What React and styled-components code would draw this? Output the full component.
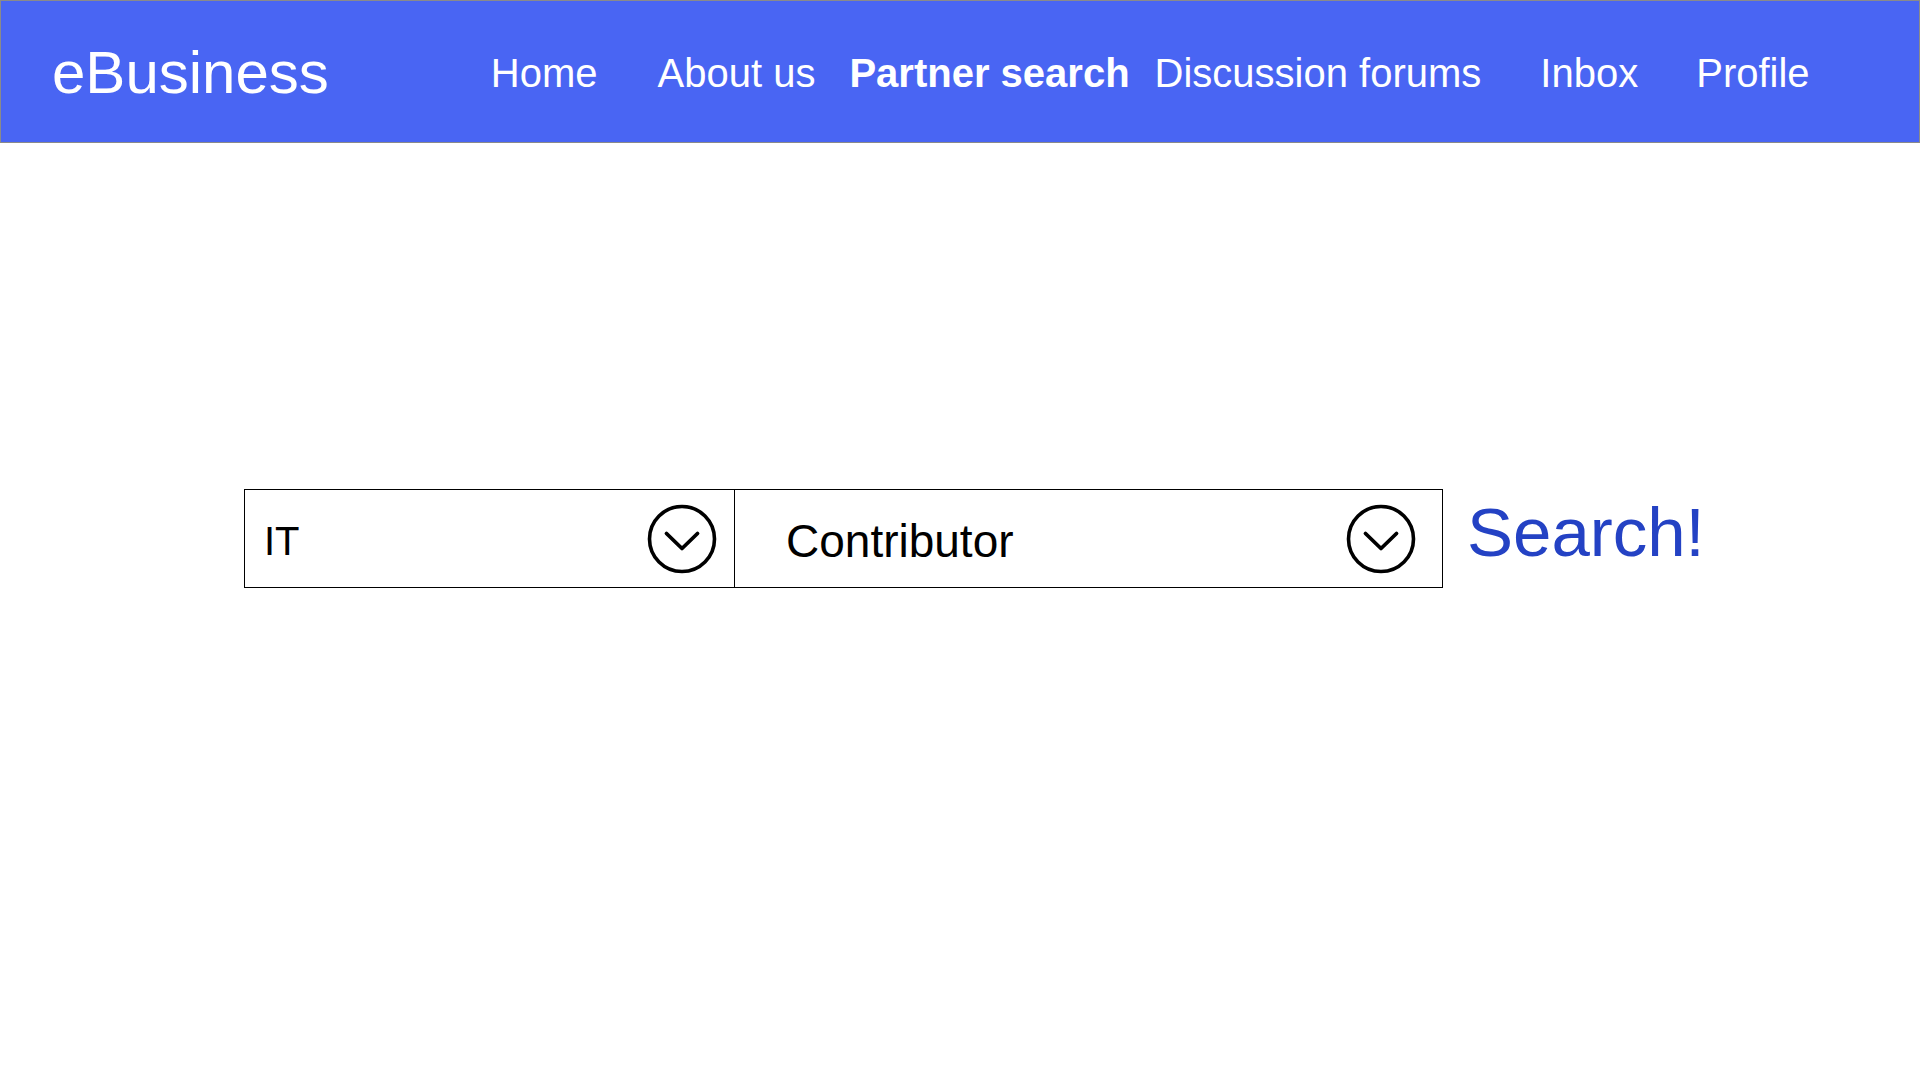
import React from "react";
import styled, { createGlobalStyle } from "styled-components";

const Global = createGlobalStyle`
  html, body { margin: 0; padding: 0; background: #ffffff; }
  body { font-family: "Liberation Sans", Arial, Helvetica, sans-serif; }
  * { box-sizing: border-box; }
`;

const Page = styled.div`
  width: 1920px;
  min-height: 1080px;
  background: #fff;
`;

const Header = styled.header`
  height: 143px;
  background: #4965f3;
  border: 1px solid #8a8a8a;
  display: flex;
  align-items: center;
  padding: 3px 0 0 51px;
`;

const Logo = styled.div`
  font-size: 60px;
  line-height: 1;
  color: #ffffff;
  white-space: nowrap;
`;

const Nav = styled.nav`
  display: flex;
  align-items: center;
  margin-left: 162px;
`;

const NavLink = styled.a`
  font-size: 40px;
  line-height: 1;
  color: #ffffff;
  font-weight: ${(p) => (p.$active ? 700 : 400)};
  margin-left: ${(p) => p.$gap || 0}px;
  white-space: nowrap;
  text-decoration: none;
  cursor: pointer;
`;

const Main = styled.main`
  padding: 346px 0 0 244px;
`;

const SearchRow = styled.div`
  display: flex;
  align-items: flex-start;
`;

const SearchBox = styled.div`
  display: flex;
  width: 1199px;
  height: 99px;
  border: 1px solid #000;
`;

const SelectCell = styled.div`
  display: flex;
  align-items: center;
  justify-content: space-between;
  width: ${(p) => (p.$width ? `${p.$width}px` : "auto")};
  flex: ${(p) => (p.$width ? "none" : 1)};
  border-right: ${(p) => (p.$divider ? "1px solid #000" : "none")};
  padding: 0 ${(p) => p.$pr}px 0 ${(p) => p.$pl}px;
`;

const SelectValue = styled.span`
  font-size: ${(p) => p.$size}px;
  line-height: 1;
  color: #000;
  padding-top: 4px;
`;

const SearchLink = styled.a`
  margin: 9px 0 0 24px;
  font-size: 69px;
  line-height: 1;
  color: #2442c4;
  text-decoration: none;
  cursor: pointer;
  white-space: nowrap;
`;

const Chevron = () => (
  <svg width="70" height="70" viewBox="0 0 70 70" aria-hidden="true">
    <circle cx="35" cy="35" r="32.5" fill="none" stroke="#000" strokeWidth="3.6" />
    <polyline
      points="19.5,29.5 35,44.5 50.5,29.5"
      fill="none"
      stroke="#000"
      strokeWidth="3.8"
      strokeLinecap="round"
      strokeLinejoin="round"
    />
  </svg>
);

export default function App() {
  return (
    <Page>
      <Global />
      <Header>
        <Logo>eBusiness</Logo>
        <Nav>
          <NavLink>Home</NavLink>
          <NavLink $gap={60}>About us</NavLink>
          <NavLink $gap={34} $active>Partner search</NavLink>
          <NavLink $gap={25}>Discussion forums</NavLink>
          <NavLink $gap={59}>Inbox</NavLink>
          <NavLink $gap={58}>Profile</NavLink>
        </Nav>
      </Header>
      <Main>
        <SearchRow>
          <SearchBox>
            <SelectCell $width={490} $divider $pl={19} $pr={17}>
              <SelectValue $size={40}>IT</SelectValue>
              <Chevron />
            </SelectCell>
            <SelectCell $pl={51} $pr={26}>
              <SelectValue $size={46}>Contributor</SelectValue>
              <Chevron />
            </SelectCell>
          </SearchBox>
          <SearchLink>Search!</SearchLink>
        </SearchRow>
      </Main>
    </Page>
  );
}
